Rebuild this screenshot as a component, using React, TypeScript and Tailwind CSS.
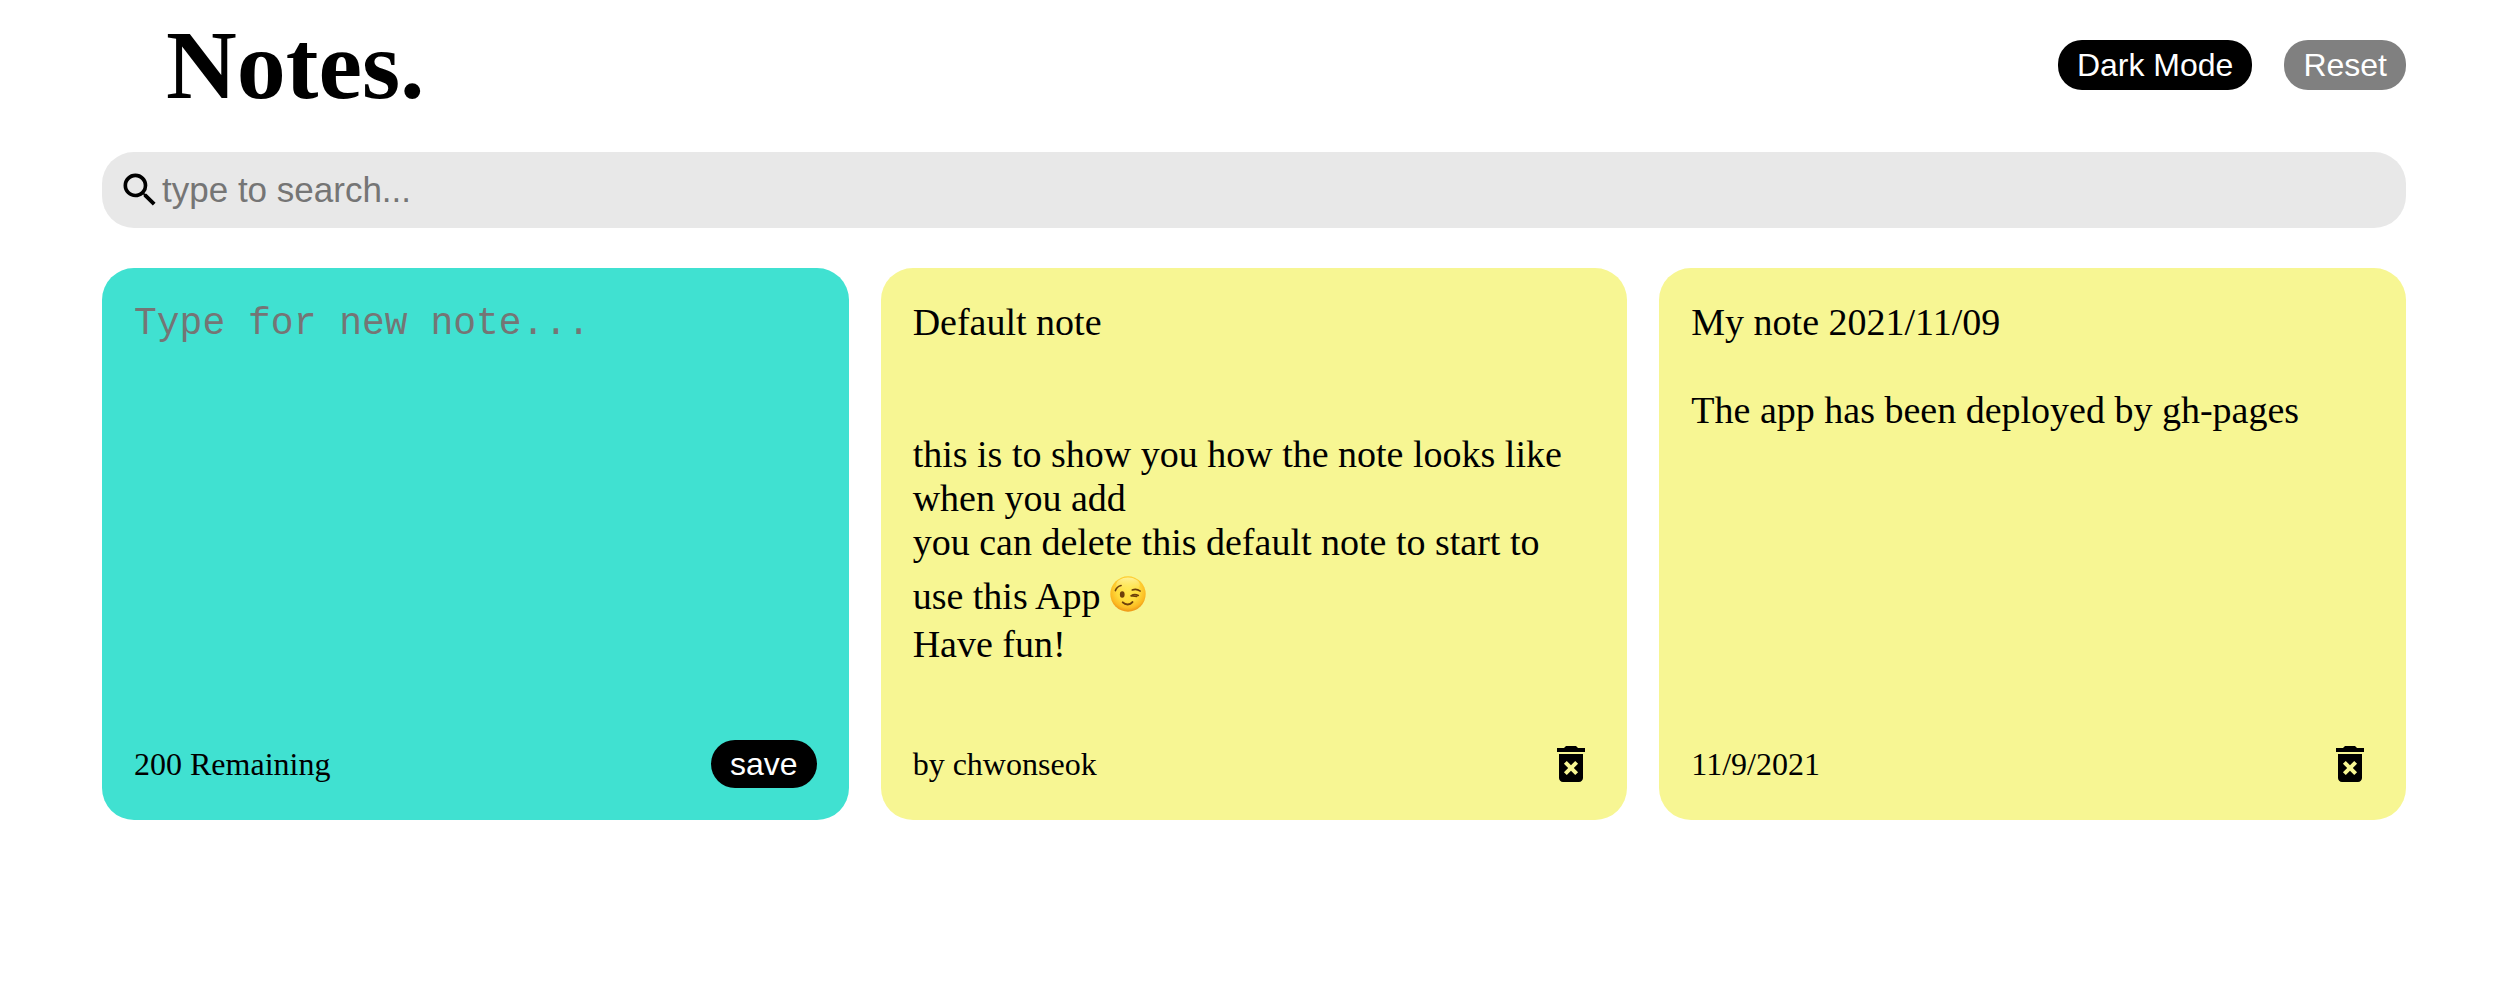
import { useState } from "react";
import { MdDeleteForever, MdSearch } from "react-icons/md";

const LIMIT = 200;

type Note = { id: string; lines: string[]; footer: string };

const initialNotes: Note[] = [
  {
    id: "default",
    lines: [
      "Default note",
      "",
      "",
      "this is to show you how the note looks like when you add",
      "you can delete this default note to start to use this App :wink:",
      "Have fun!",
    ],
    footer: "by chwonseok",
  },
  {
    id: "first",
    lines: ["My note 2021/11/09", "", "The app has been deployed by gh-pages"],
    footer: "11/9/2021",
  },
];

function Wink() {
  return (
    <svg
      role="img"
      aria-label="winking face"
      viewBox="0 0 35 35"
      className="mt-[12px] mb-[10px] inline-block size-9 align-[-13px]"
    >
      <defs>
        <radialGradient id="face" cx="50%" cy="40%" r="62%">
          <stop offset="0" stopColor="#ffe84f" />
          <stop offset="0.5" stopColor="#ffdc3c" />
          <stop offset="0.8" stopColor="#fcbb22" />
          <stop offset="1" stopColor="#ea8c14" />
        </radialGradient>
        <linearGradient id="shine" x1="0" y1="0" x2="0" y2="1">
          <stop offset="0" stopColor="#fffbb8" stopOpacity="0.75" />
          <stop offset="1" stopColor="#fff07a" stopOpacity="0" />
        </linearGradient>
      </defs>
      <circle cx="17.5" cy="17.5" r="17.2" fill="url(#face)" />
      <ellipse cx="17.5" cy="8.5" rx="11.5" ry="7" fill="url(#shine)" />
      <ellipse cx="11.9" cy="18" rx="2.3" ry="3.2" fill="#6e400a" />
      <g fill="none" stroke="#6e400a" strokeWidth="1.5" strokeLinecap="round">
        <path d="M5.2 14.2C6.2 11.6 8.2 9.9 10.8 9.3" />
        <path d="M21.6 13.6C24.2 12.6 27 12.9 29.4 14.6" />
        <path d="M20.4 19.3C22.4 17.9 25.4 17.8 27.6 18.9M20.4 19.3L26 19.9" />
        <path d="M12.4 25.6C15.2 28.4 19.4 28.3 21.8 25.4" strokeWidth="1.9" />
      </g>
    </svg>
  );
}

function NoteLine({ text }: { text: string }) {
  const [before, after] = text.split(":wink:");
  return (
    <p className="min-h-11">
      {before}
      {after !== undefined && <Wink />}
      {after}
    </p>
  );
}

function NoteCard({ note, onDelete }: { note: Note; onDelete: () => void }) {
  return (
    <article className="flex min-h-[552px] flex-col justify-between rounded-4xl bg-[#f7f693] p-8 text-black">
      <div className="text-[38px] leading-11">
        {note.lines.map((line, i) => (
          <NoteLine key={i} text={line} />
        ))}
      </div>
      <footer className="flex items-center justify-between text-[32px] leading-9">
        <small className="text-[32px]">{note.footer}</small>
        <button type="button" aria-label="Delete note" onClick={onDelete}>
          <MdDeleteForever className="size-12" />
        </button>
      </footer>
    </article>
  );
}

export default function App() {
  const [notes, setNotes] = useState(initialNotes);
  const [query, setQuery] = useState("");
  const [draft, setDraft] = useState("");
  const [dark, setDark] = useState(false);

  const save = () => {
    if (!draft.trim()) return;
    setNotes([
      ...notes,
      { id: String(Date.now()), lines: draft.split("\n"), footer: new Date().toLocaleDateString("en-US") },
    ]);
    setDraft("");
  };

  const visible = notes.filter((n) => n.lines.join("\n").toLowerCase().includes(query.toLowerCase()));

  return (
    <div
      className={`min-h-screen pt-[10px] pr-[88px] pb-10 pl-[102px] font-['Liberation_Serif',serif] ${
        dark ? "bg-black text-white" : "bg-white text-black"
      }`}
    >
      <header className="flex items-center justify-between">
        <h1 className="ml-16 text-[98px] leading-[110px] font-bold">Notes.</h1>
        <div className="flex gap-8 font-['Liberation_Sans',sans-serif] text-[32px] leading-9 text-white">
          <button type="button" onClick={() => setDark(!dark)} className="h-[50px] rounded-3xl bg-black px-[19px]">
            Dark Mode
          </button>
          <button
            type="button"
            onClick={() => setNotes(initialNotes)}
            className="h-[50px] rounded-3xl bg-[#808080] px-[19px]"
          >
            Reset
          </button>
        </div>
      </header>

      <label className="mt-8 flex items-center rounded-4xl bg-[#e8e8e8] p-4 text-black">
        <MdSearch className="size-11 shrink-0" />
        <input
          type="text"
          aria-label="Search notes"
          placeholder="type to search..."
          value={query}
          onChange={(e) => setQuery(e.target.value)}
          className="w-full bg-transparent font-['Liberation_Sans',sans-serif] text-[35px] leading-10 outline-none placeholder:text-[#757575]"
        />
      </label>

      <main className="mt-10 grid grid-cols-3 gap-8">
        <section className="flex min-h-[552px] flex-col rounded-4xl bg-[#40e1d1] p-8 text-black">
          <textarea
            aria-label="New note"
            placeholder="Type for new note..."
            maxLength={LIMIT}
            value={draft}
            onChange={(e) => setDraft(e.target.value)}
            className="w-full grow resize-none bg-transparent pt-0.5 font-['Liberation_Mono',monospace] text-[38px] leading-11 outline-none placeholder:text-[#757575]"
          />
          <footer className="flex items-center justify-between text-[32px] leading-9">
            <small className="text-[32px]">{LIMIT - draft.length} Remaining</small>
            <button
              type="button"
              onClick={save}
              className="h-12 rounded-3xl bg-black px-[19px] font-['Liberation_Sans',sans-serif] text-white"
            >
              save
            </button>
          </footer>
        </section>
        {visible.map((note) => (
          <NoteCard key={note.id} note={note} onDelete={() => setNotes(notes.filter((n) => n.id !== note.id))} />
        ))}
      </main>
    </div>
  );
}
